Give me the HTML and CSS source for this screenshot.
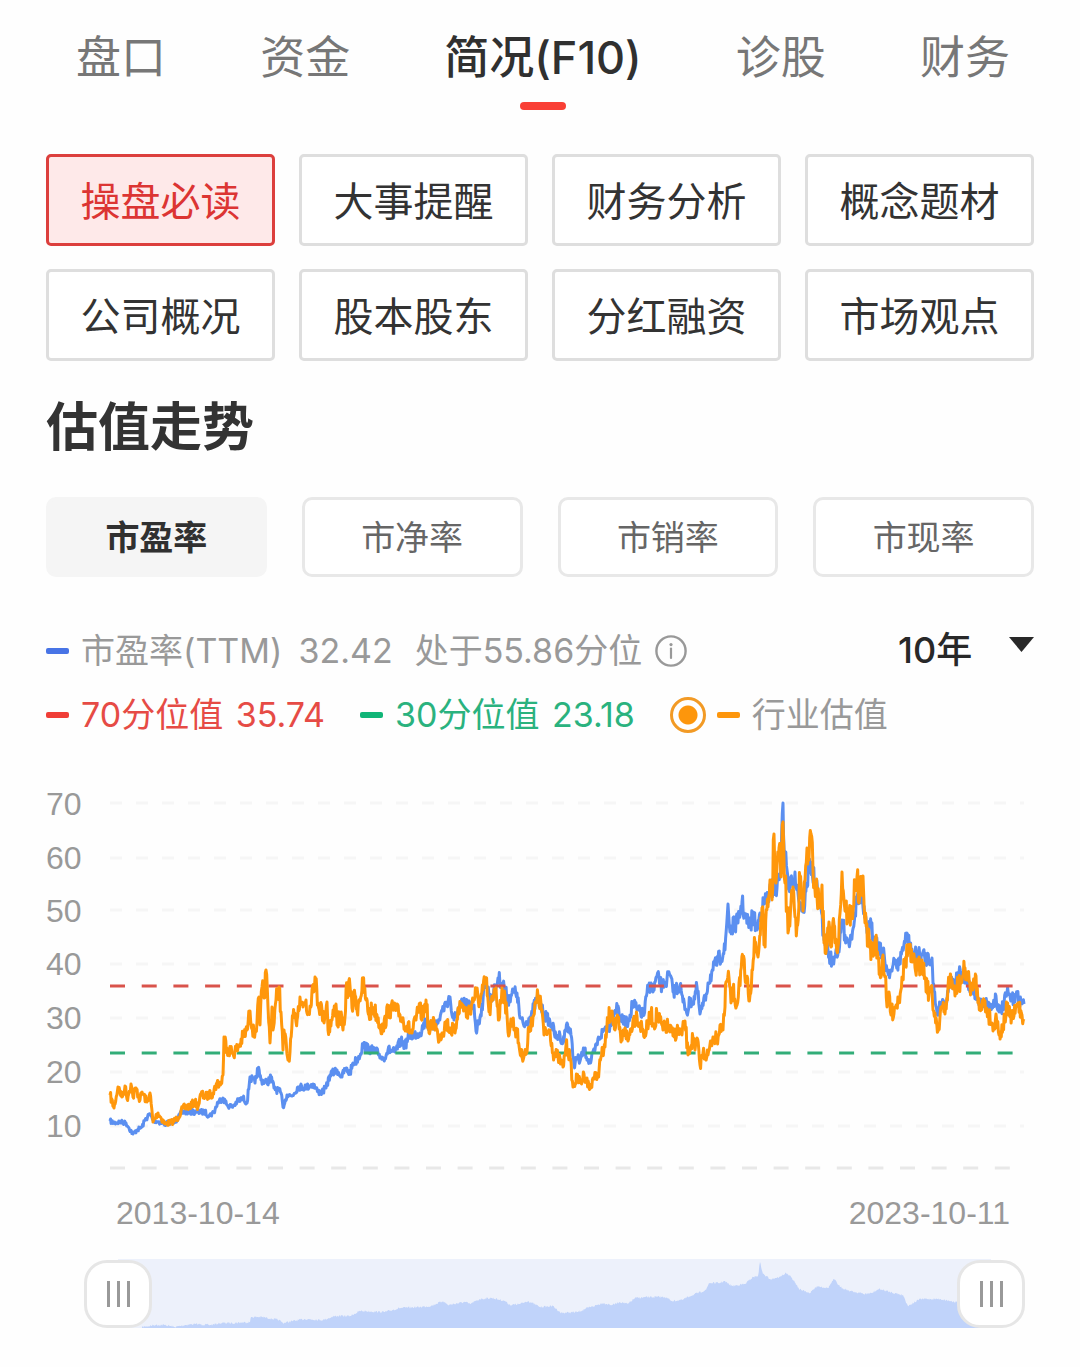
FILE: index.html
```html
<!DOCTYPE html>
<html lang="zh-CN">
<head>
<meta charset="utf-8">
<meta name="viewport" content="width=device-width, initial-scale=1">
<title>简况(F10)</title>
<link rel="stylesheet" href="styles.css">
</head>
<body>
<nav class="tabs">
  <a class="tab" href="#pankou">盘口</a>
  <a class="tab" href="#zijin">资金</a>
  <a class="tab tab-active" href="#f10" aria-current="page">简况(F10)</a>
  <a class="tab" href="#zhengu">诊股</a>
  <a class="tab" href="#caiwu">财务</a>
</nav>
<main class="page">
  <div class="sections">
    <button class="section section-active" type="button">操盘必读</button>
    <button class="section" type="button">大事提醒</button>
    <button class="section" type="button">财务分析</button>
    <button class="section" type="button">概念题材</button>
    <button class="section" type="button">公司概况</button>
    <button class="section" type="button">股本股东</button>
    <button class="section" type="button">分红融资</button>
    <button class="section" type="button">市场观点</button>
  </div>

  <h1 class="title">估值走势</h1>

  <div class="metrics">
    <button class="metric metric-active" type="button">市盈率</button>
    <button class="metric" type="button">市净率</button>
    <button class="metric" type="button">市销率</button>
    <button class="metric" type="button">市现率</button>
  </div>

  <div class="legend">
    <div class="legend-row">
      <span class="key key-blue"></span>
      <span class="legend-name">市盈率(TTM)</span>
      <span class="legend-value">32.42</span>
      <span class="legend-rank">处于55.86分位</span>
      <svg class="info" viewBox="0 0 32 32" role="img" aria-label="说明">
        <circle cx="16" cy="16" r="14.6" fill="none" stroke="#999" stroke-width="2.4"/>
        <circle cx="16" cy="9.6" r="1.6" fill="#999"/>
        <path d="M16 13.5V23" stroke="#999" stroke-width="2.2" stroke-linecap="round"/>
      </svg>
      <label class="period">
        <select class="period-select" aria-label="时间范围">
          <option>10年</option>
          <option>5年</option>
          <option>3年</option>
        </select>
      </label>
    </div>
    <div class="legend-row">
      <span class="key key-red"></span>
      <span class="legend-high">70分位值 <span class="legend-number">35.74</span></span>
      <span class="key key-green"></span>
      <span class="legend-low">30分位值 <span class="legend-number">23.18</span></span>
      <input class="industry-toggle" type="checkbox" id="industry" checked>
      <span class="key key-orange"></span>
      <label for="industry">行业估值</label>
    </div>
  </div>

  <svg class="chart" viewBox="46 780 988 460" role="img" aria-label="市盈率走势">
    <g class="grid">
      <path d="M110 803H1024M110 858H1024M110 910H1024M110 964H1024M110 1018H1024M110 1072H1024M110 1126H1024"/>
    </g>
    <path class="baseline" d="M110 1168H1024"/>
    <g class="axis">
      <text x="46" y="815">70</text>
      <text x="46" y="869">60</text>
      <text x="46" y="922">50</text>
      <text x="46" y="975">40</text>
      <text x="46" y="1029">30</text>
      <text x="46" y="1083">20</text>
      <text x="46" y="1137">10</text>
      <text x="116" y="1224">2013-10-14</text>
      <text x="1010" y="1224" text-anchor="end">2023-10-11</text>
    </g>
    <polyline class="line line-blue" id="line-pe"/>
    <path class="ref ref-red" d="M110 986H1024"/>
    <path class="ref ref-green" d="M110 1053H1024"/>
    <polyline class="line line-orange" id="line-industry"/>
  </svg>

  <div class="range">
    <svg class="range-area" viewBox="118 1259 873 69" preserveAspectRatio="none" aria-hidden="true">
      <polygon id="area-pe" fill="#c0d3fa"/>
    </svg>
    <input class="range-input" type="range" min="0" max="100" value="0" aria-label="开始日期">
    <input class="range-input" type="range" min="0" max="100" value="100" aria-label="结束日期">
  </div>
</main>
<script src="chart.js"></script>
</body>
</html>
```
FILE: styles.css
```css
* {
  box-sizing: border-box;
}

body {
  margin: 0;
  background: #fefefe;
  color: #333;
  font-family: Inter, "Noto Sans CJK SC", sans-serif;
}

button,
select {
  font-family: inherit;
}

.tabs {
  display: flex;
  justify-content: space-between;
  height: 110px;
  padding: 24px 70px 0 76px;
}

.tab {
  position: relative;
  color: #777;
  font-size: 45px;
  line-height: 68px;
  text-decoration: none;
}

.tab-active {
  color: #303030;
  font-weight: 500;
}

.tab-active::after {
  content: "";
  position: absolute;
  left: 50%;
  bottom: 0;
  width: 46px;
  height: 8px;
  margin-left: -23px;
  border-radius: 4px;
  background: #f93f35;
}

.page {
  padding: 44px 46px 38px;
}

.sections {
  display: grid;
  grid-template-columns: repeat(4, 1fr);
  gap: 23px 24px;
}

.section {
  height: 92px;
  padding: 0 0 2px;
  border: 3px solid #dedede;
  border-radius: 5px;
  background: #fff;
  color: #333;
  font-size: 40px;
}

.section-active {
  border-color: #dc3f3d;
  background: #fee9e9;
  color: #dc3533;
}

.title {
  margin: 28px 0 30px;
  font-size: 52px;
  font-weight: 600;
  line-height: 78px;
}

.metrics {
  display: grid;
  grid-template-columns: repeat(4, 1fr);
  gap: 35px;
}

.metric {
  height: 80px;
  padding: 0 0 4px;
  border: 3px solid #e8e8e8;
  border-radius: 10px;
  background: #fff;
  color: #666;
  font-size: 34px;
}

.metric-active {
  border-color: #f5f5f5;
  background: #f5f5f5;
  color: #303030;
  font-weight: 600;
}

.legend {
  margin-top: 42px;
  color: #999;
  font-size: 34px;
  line-height: 60px;
}

.legend-row {
  display: flex;
  align-items: center;
  height: 64px;
  white-space: nowrap;
}

.key {
  width: 23px;
  height: 6px;
  margin-right: 12px;
  border-radius: 2px;
}

.key-blue {
  background: #4874e6;
}

.key-red {
  background: #f03e37;
}

.key-green {
  background: #10b577;
}

.key-orange {
  background: #fd960c;
}

.legend-value {
  margin: 0 22px 0 16px;
}

.legend-number {
  margin-left: 3px;
}

.info {
  width: 32px;
  height: 32px;
  margin-left: 13px;
}

.legend-high {
  margin-right: 35px;
  color: #e64b45;
}

.legend-low {
  margin-right: 35px;
  color: #2ab27e;
}

.industry-toggle {
  appearance: none;
  width: 36px;
  height: 36px;
  margin: 0 11px 0 0;
  border: 3px solid #f29a25;
  border-radius: 50%;
}

.industry-toggle:checked {
  background: radial-gradient(circle, #fd960c 9px, transparent 10px);
}

.period {
  position: relative;
  width: 136px;
  margin-left: auto;
}

.period::after {
  content: "";
  position: absolute;
  top: 16px;
  right: 0;
  width: 25px;
  height: 15px;
  background: #282828;
  clip-path: polygon(0 0, 100% 0, 50% 100%);
  pointer-events: none;
}

.period-select {
  appearance: none;
  width: 100%;
  padding: 0;
  border: 0;
  background: none;
  color: #282828;
  font-size: 36px;
  font-weight: 500;
}

.chart {
  display: block;
  width: 100%;
  margin-top: 33px;
}

.grid path {
  fill: none;
  stroke: #f6f6f6;
  stroke-width: 3;
  stroke-dasharray: 12 14;
}

.baseline {
  stroke: #e8e8e8;
  stroke-width: 3;
  stroke-dasharray: 15 16.6;
}

.axis text {
  fill: #999;
  font-family: "Liberation Sans", sans-serif;
  font-size: 32px;
}

.line {
  fill: none;
  stroke-width: 3;
  stroke-linejoin: round;
}

.line-blue {
  stroke: #5b8ff0;
}

.line-orange {
  stroke: #ff970b;
}

.ref {
  stroke-width: 3;
  stroke-dasharray: 15 16.7;
}

.ref-red {
  stroke: #d9534b;
}

.ref-green {
  stroke: #32ad78;
}

.range {
  position: relative;
  height: 69px;
  margin: 19px 9px 0 38px;
}

.range-area {
  display: block;
  width: calc(100% - 68px);
  height: 100%;
  margin-left: 34px;
  background: #edf1fb;
}

.range-input {
  appearance: none;
  position: absolute;
  inset: 0;
  width: 100%;
  height: 100%;
  margin: 0;
  background: none;
  pointer-events: none;
}

.range-input::-webkit-slider-thumb {
  appearance: none;
  width: 68px;
  height: 68px;
  border: 3px solid #e6e6e6;
  border-radius: 23px;
  background:
    linear-gradient(#999, #999) 20px 50% / 3px 26px no-repeat,
    linear-gradient(#999, #999) 30px 50% / 3px 26px no-repeat,
    linear-gradient(#999, #999) 40px 50% / 3px 26px no-repeat,
    #fff;
  pointer-events: auto;
}
```
FILE: chart.js
```js
// Turning points of each series, as x,y pairs in chart units.
const pe = `110,1121 114,1123 120,1122 126,1123 129,1128 133,1134 137,1130 142,1127 145,1120 150,1114 153,1120 165,1124 177,1120 182,1112 190,1112 205,1112 209,1116 214,1112 218,1102 223,1098 227,1105 232,1107 237,1102 243,1098 247,1103 250,1077 255,1083 258,1068 261,1080 267,1083 271,1077 274,1088 281,1093 283,1107 287,1095 292,1096 298,1087 307,1087 313,1084 318,1092 322,1092 326,1088 330,1075 337,1070 342,1077 345,1069 350,1073 353,1063 358,1059 363,1045 367,1048 378,1053 383,1059 388,1050 395,1052 401,1041 405,1046 409,1036 420,1033 426,1020 429,1028 438,1023 441,1013 447,1002 450,997 452,1015 454,1020 458,1010 463,1003 472,1007 474,1005 476,1031 480,1017 483,1000 486,978 490,1000 495,990 498,978 503,983 508,1000 512,993 517,993 520,1018 524,1026 530,1017 538,997 543,1013 547,1018 552,1025 556,1038 560,1035 563,1043 567,1023 571,1035 574,1065 577,1058 580,1061 584,1050 590,1063 595,1050 599,1038 605,1028 610,1026 613,1012 618,1006 621,1020 627,1023 630,1015 633,1002 637,1010 644,1015 647,993 651,983 653,992 657,976 662,987 667,979 670,975 673,992 680,985 683,1002 688,1012 690,1000 693,1002 697,987 700,1014 705,1000 708,983 713,970 718,960 725,950 728,904 730,932 735,923 738,923 742,902 745,917 750,927 753,915 757,930 760,913 766,900 773,887 777,888 781,863 783,803 784,847 787,870 789,890 792,883 795,872 798,893 803,912 807,887 809,860 815,883 821,908 824,940 828,950 832,963 836,950 839,952 842,920 845,935 850,942 855,913 858,893 863,907 867,933 870,925 875,940 883,953 887,970 892,971 895,962 899,965 902,950 905,943 907,933 910,948 915,955 922,955 927,958 932,958 933,983 937,1013 942,1002 947,1000 950,977 954,987 959,973 965,983 973,988 978,1000 979,1005 985,1002 992,1008 996,996 999,1012 1003,1007 1007,993 1012,1000 1016,995 1021,1002 1024,1004`;

const industry = `110,1095 114,1108 118,1087 122,1097 125,1086 127,1099 131,1084 133,1097 136,1088 140,1100 142,1092 147,1102 150,1093 153,1122 158,1113 165,1124 172,1122 177,1119 183,1108 190,1106 195,1102 198,1107 201,1094 205,1097 213,1093 217,1083 221,1084 223,1075 224,1037 227,1048 233,1053 238,1048 243,1037 247,1030 250,1011 254,1036 257,1022 259,997 260,1025 262,987 264,998 266,970 268,1007 270,1043 272,1007 273,1030 276,1000 279,987 281,1012 283,1050 284,1030 288,1060 290,1052 293,1017 296,1022 300,997 303,1007 306,1000 307,1013 310,1006 312,990 315,977 318,1003 322,1010 323,1021 327,1002 328,1030 332,1020 336,1004 337,1025 340,1014 343,1030 345,1017 346,990 350,986 352,1008 355,995 357,1010 359,1000 363,984 366,1000 369,1015 373,1008 377,1015 380,1025 383,1030 388,1010 394,1009 400,1015 407,1026 412,1033 416,1020 418,1009 423,1015 426,1000 429,1033 434,1020 438,1037 442,1033 446,1023 450,1028 455,1033 458,1008 463,1005 467,1015 472,1003 476,993 480,1002 483,990 486,980 489,1012 493,1000 496,988 499,1020 502,988 505,997 508,1032 512,1020 517,1033 521,1056 527,1052 529,1027 533,1017 538,996 542,1010 544,1035 550,1030 553,1053 558,1057 563,1067 566,1045 570,1057 573,1087 577,1078 581,1083 584,1074 590,1089 593,1078 598,1075 601,1057 605,1047 608,1018 612,1011 615,1030 618,1020 621,1042 625,1028 628,1041 633,1020 637,1016 642,1028 645,1035 651,1014 654,1025 657,1014 663,1030 668,1026 673,1036 678,1030 682,1035 685,1021 688,1055 693,1038 695,1050 697,1038 700,1065 703,1053 708,1055 713,1037 717,1040 720,1025 723,1030 725,1007 726,982 729,978 731,1003 733,992 737,1005 739,983 743,961 746,983 750,995 752,970 755,943 758,957 762,908 764,945 768,907 770,880 772,900 774,834 776,883 779,848 781,877 783,822 785,883 787,907 788,933 791,903 793,887 795,917 797,926 800,877 803,911 805,880 807,848 809,860 811,834 813,870 816,890 820,907 822,885 824,943 827,946 829,922 831,947 834,925 838,947 840,913 842,872 844,900 848,918 852,913 855,887 857,877 859,903 863,876 865,923 868,937 872,953 875,940 878,957 881,977 883,955 885,977 887,1007 889,992 891,1015 895,1007 899,998 902,977 905,963 908,947 912,962 918,970 922,960 925,977 929,993 931,987 933,1010 935,1013 938,1031 941,1007 945,1014 948,987 951,977 955,996 958,983 961,983 965,968 968,980 973,990 976,976 978,1003 983,1002 988,1013 992,1023 993,1031 996,1014 999,1035 1003,1027 1007,1008 1010,1017 1014,1016 1018,1003 1022,1015 1024,1019`;

const overview = `142,1327 155,1325 165,1325 175,1327 185,1325 195,1324 210,1325 222,1323 232,1323 250,1322 251,1317 262,1317 279,1320 283,1323 293,1321 305,1319 323,1320 335,1316 350,1316 360,1311 385,1312 400,1308 420,1307 431,1306 443,1301 448,1305 465,1302 470,1304 480,1299 492,1298 505,1301 510,1305 520,1304 528,1301 540,1307 553,1306 561,1313 578,1312 585,1309 603,1303 612,1305 620,1302 628,1304 635,1298 650,1297 665,1297 672,1301 682,1300 690,1296 706,1290 709,1283 720,1283 724,1281 732,1286 745,1284 753,1277 758,1276 760,1262 763,1274 770,1279 780,1277 786,1273 792,1278 799,1289 810,1293 817,1286 828,1288 834,1279 840,1287 850,1291 865,1294 872,1293 879,1289 890,1292 903,1295 908,1306 920,1299 940,1299 950,1301 957,1302 991,1304`;

// Fills in the daily moves between turning points with a repeatable jitter.
// The swing widens as the value rises (smaller y).
function daily(text, base, growth) {
  let seed = 7;
  const next = () => (seed = (seed * 16807) % 2147483647) / 2147483647 - 0.5;
  const turns = text.split(" ").map((pair) => pair.split(",").map(Number));
  const out = [turns[0]];
  for (let i = 1; i < turns.length; i++) {
    const [x0, y0] = turns[i - 1];
    const [x1, y1] = turns[i];
    const steps = Math.max(1, Math.round((x1 - x0) / 0.6));
    for (let s = 1; s < steps; s++) {
      const t = s / steps;
      const y = y0 + (y1 - y0) * t;
      const swing = base + growth * Math.max(0, 1130 - y);
      out.push([x0 + (x1 - x0) * t, y + next() * swing]);
    }
    out.push([x1, y1]);
  }
  return out.map(([x, y]) => x.toFixed(1) + "," + y.toFixed(1)).join(" ");
}

document.getElementById("line-pe").setAttribute("points", daily(pe, 4, 0.07));
document.getElementById("line-industry").setAttribute("points", daily(industry, 5, 0.11));
document.getElementById("area-pe").setAttribute(
  "points",
  "142,1328 " + daily(overview, 2, 0) + " 991,1328"
);
```
